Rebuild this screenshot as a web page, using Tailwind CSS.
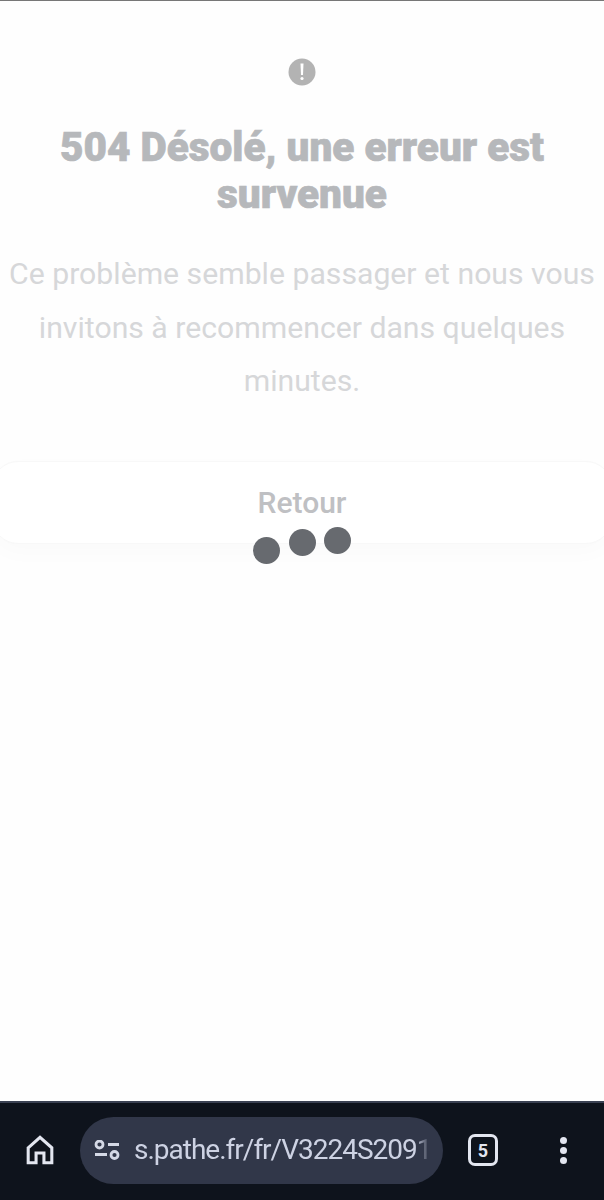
<!DOCTYPE html>
<html lang="fr">
<head>
    <meta charset="UTF-8">
    <meta name="viewport" content="width=device-width, initial-scale=1.0">
    <title>Erreur</title>
    <script src="https://cdn.jsdelivr.net/npm/@tailwindcss/browser@4"></script>
</head>
<body class="bg-white font-['Roboto',sans-serif]">
    <div class="w-[604px] h-[1200px] flex flex-col overflow-hidden relative">
        <div class="h-px bg-[#777777] shrink-0"></div>

        <!-- Page content -->
        <main class="flex-1 flex flex-col items-center pt-[57px] bg-[#fefefe]">
            <svg width="28" height="28" viewBox="0 0 28 28">
                <circle cx="14" cy="14" r="13.5" fill="#b3b3b3"/>
                <path d="M12.500 5.500h3l-.5 11.500h-2z" fill="#fff"/>
                <circle cx="14" cy="20.500" r="1.600" fill="#fff"/>
            </svg>
            <h1 class="mt-[38px] text-[40.500px] leading-[47px] font-black text-[#b6b8bb] [-webkit-text-stroke:0.7px_#b6b8bb] text-center w-[520px]">504 Désolé, une erreur est survenue</h1>
            <p class="mt-[29px] text-[30.200px] leading-[53.500px] text-[#d6d7d9] text-center w-[604px]">Ce problème semble passager et nous vous invitons à recommencer dans quelques minutes.</p>
            <button class="mt-[53px] w-[620px] h-[83px] shrink-0 rounded-[26px] border border-[#f8f8f8] bg-white shadow-[0_8px_24px_rgba(0,0,0,0.02)] text-[30px] font-medium text-[#bfc0c3]">Retour</button>
        </main>

        <!-- Loading dots -->
        <div class="absolute left-[253px] top-[537px] w-[27px] h-[27px] rounded-full bg-[#676a6f]"></div>
        <div class="absolute left-[289px] top-[529px] w-[27px] h-[27px] rounded-full bg-[#676a6f]"></div>
        <div class="absolute left-[324px] top-[527px] w-[27px] h-[27px] rounded-full bg-[#676a6f]"></div>

        <!-- Browser bar -->
        <div class="h-[99px] shrink-0 bg-[#0e131c] border-t-2 border-[#3a4152] flex items-center pl-[26px] pb-[3px]">
            <svg width="28" height="30" viewBox="0 0 32 34" fill="none" stroke="#e3e6f0" stroke-width="3.500" stroke-linejoin="miter" class="shrink-0">
                <path d="M2.500 14.500 16 2.500l13.500 12v17h-9V20.500h-9V31.500h-9z"/>
            </svg>
            <div class="ml-[26px] w-[363px] h-[67px] shrink-0 rounded-full bg-[#313749] flex items-center pl-[14px]">
                <svg width="26" height="20" viewBox="0 0 26 20" fill="none" stroke="#d5d9e6" stroke-width="2.800" class="shrink-0">
                    <circle cx="5.500" cy="4.500" r="3.500"/>
                    <path d="M14 4.500h11M1 14.500h12"/>
                    <circle cx="20.500" cy="15" r="3.500"/>
                </svg>
                <span class="ml-[14px] w-[296px] overflow-hidden text-[28px] leading-[36px] tracking-[-1px] text-[#cdd2e3] whitespace-nowrap [mask-image:linear-gradient(to_right,black_95%,transparent)]">s.pathe.fr/fr/V3224S2091</span>
            </div>
            <div class="ml-[25px] w-[30px] h-[32px] shrink-0 rounded-[7px] border-[3px] border-[#e3e6f0] flex items-center justify-center text-[18px] font-bold text-[#e3e6f0]">5</div>
            <div class="ml-[62px] flex flex-col gap-[3px] shrink-0">
                <div class="w-[7px] h-[7px] rounded-full bg-[#e3e6f0]"></div>
                <div class="w-[7px] h-[7px] rounded-full bg-[#e3e6f0]"></div>
                <div class="w-[7px] h-[7px] rounded-full bg-[#e3e6f0]"></div>
            </div>
        </div>
    </div>
</body>
</html>
